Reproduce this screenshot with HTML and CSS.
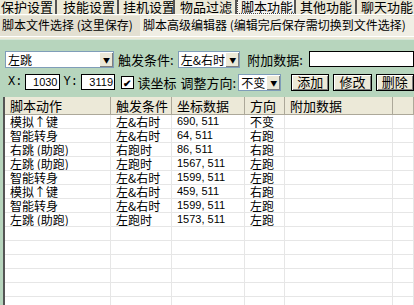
FILE: index.html
```html
<!DOCTYPE html>
<html lang="zh-CN">
<head>
    <meta charset="UTF-8">
    <title>脚本功能</title>
    <link rel="stylesheet" href="styles.css">
</head>
<body>
    <div class="tabs">
        <span class="tab">保护设置</span>
        <span class="tab">技能设置</span>
        <span class="tab">挂机设置</span>
        <span class="tab">物品过滤</span>
        <span class="tab active">脚本功能</span>
        <span class="tab">其他功能</span>
        <span class="tab">聊天功能</span>
    </div>
    <div class="subtabs">
        <span class="subtab">脚本文件选择 (这里保存)</span>
        <span class="subtab current">脚本高级编辑器 (编辑完后保存需切换到文件选择)</span>
    </div>

    <div class="panel">
        <div class="row row-top">
            <div class="combo combo-action"><span class="val">左跳</span><span class="drop">&#9660;</span></div>
            <span class="lbl">触发条件:</span>
            <div class="combo combo-trigger"><span class="val">左&amp;右时</span><span class="drop">&#9660;</span></div>
            <span class="lbl lbl-extra">附加数据:</span>
            <div class="field field-extra"></div>
        </div>
        <div class="row row-second">
            <span class="lbl lbl-xy">X:</span>
            <div class="field field-num">1030</div>
            <span class="lbl lbl-xy">Y:</span>
            <div class="field field-num">3119</div>
            <span class="check">&#10004;</span>
            <span class="lbl">读坐标</span>
            <span class="lbl">调整方向:</span>
            <div class="combo combo-dir"><span class="val">不变</span><span class="drop">&#9660;</span></div>
            <button class="btn btn-add">添加</button>
            <button class="btn">修改</button>
            <button class="btn">删除</button>
        </div>

        <div class="list">
            <div class="line head">
                <span>脚本动作</span><span>触发条件</span><span>坐标数据</span><span>方向</span><span>附加数据</span><span></span>
            </div>
            <div class="line"><span>模拟↑键</span><span>左&amp;右时</span><span class="num">690, 511</span><span>不变</span><span></span><span></span></div>
            <div class="line"><span>智能转身</span><span>左&amp;右时</span><span class="num">64, 511</span><span>右跑</span><span></span><span></span></div>
            <div class="line"><span>右跳 (助跑)</span><span>右跑时</span><span class="num">86, 511</span><span>右跑</span><span></span><span></span></div>
            <div class="line"><span>左跳 (助跑)</span><span>左跑时</span><span class="num">1567, 511</span><span>左跑</span><span></span><span></span></div>
            <div class="line"><span>智能转身</span><span>左&amp;右时</span><span class="num">1599, 511</span><span>左跑</span><span></span><span></span></div>
            <div class="line"><span>模拟↑键</span><span>左&amp;右时</span><span class="num">459, 511</span><span>右跑</span><span></span><span></span></div>
            <div class="line"><span>智能转身</span><span>左&amp;右时</span><span class="num">1599, 511</span><span>左跑</span><span></span><span></span></div>
            <div class="line"><span>左跳 (助跑)</span><span>左跑时</span><span class="num">1573, 511</span><span>左跑</span><span></span><span></span></div>
            <div class="line"><span></span><span></span><span></span><span></span><span></span><span></span></div>
            <div class="line"><span></span><span></span><span></span><span></span><span></span><span></span></div>
            <div class="line"><span></span><span></span><span></span><span></span><span></span><span></span></div>
            <div class="line"><span></span><span></span><span></span><span></span><span></span><span></span></div>
            <div class="line"><span></span><span></span><span></span><span></span><span></span><span></span></div>
            <div class="line"><span></span><span></span><span></span><span></span><span></span><span></span></div>
            <div class="line"><span></span><span></span><span></span><span></span><span></span><span></span></div>
        </div>
    </div>
</body>
</html>
```

FILE: styles.css
```css
body { margin: 0; width: 414px; height: 305px; overflow: hidden; background: #ece9d8; font-family: "Noto Sans CJK SC", "Liberation Sans", sans-serif; font-size: 12px; color: #000; }

/* top tab strip, its upper edge is outside the window */
.tabs { display: flex; height: 14px; border-bottom: 1px solid #fff; }
.tab { padding-left: 1px; line-height: 13px; font-size: 13px; border-right: 2px solid #555; box-sizing: border-box; white-space: nowrap; overflow: hidden; }
.tab:nth-child(1) { width: 57px; }
.tab:nth-child(2) { width: 62px; padding-left: 6px; }
.tab:nth-child(3) { width: 56px; padding-left: 4px; }
.tab:nth-child(4) { width: 62px; padding-left: 5px; }
.tab:nth-child(6) { width: 61px; padding-left: 4px; }
.tab:nth-child(7) { flex: 1; padding-left: 4px; border-right: 0; }
.tab.active { width: 59px; padding-left: 3px; border: 1px dotted #444; border-top: 0; border-right: 2px solid #555; background: #f4f3ee; }

.subtabs { display: flex; height: 20px; padding-top: 1px; border-bottom: 1px solid #fff; }
.subtab { line-height: 18px; font-size: 12px; padding-left: 2px; white-space: nowrap; }
.subtab:first-child { width: 138px; background: #e3e0d2; }
.subtab.current { padding-left: 3px; background: #f0eee4; flex: 1; }

.panel { margin-top: 2px; background: #b7d5bd; height: 267px; border-top: 1px solid #d6e8da; padding-top: 10px; box-sizing: border-box; }

.row { display: flex; align-items: center; padding-left: 5px; }
.row-top { height: 18px; gap: 4px; }
.row-second { height: 18px; margin-top: 5px; padding-left: 8px; gap: 4px; }

.lbl { font-size: 13px; white-space: nowrap; }
.lbl-xy { font-family: "Liberation Mono", monospace; font-size: 12px; width: 13px; }
.lbl-extra { margin-left: 3px; }

.combo { display: flex; height: 17px; background: #fff; border: 1px solid #7f9db9; box-sizing: border-box; }
.combo .val { flex: 1; padding-left: 2px; line-height: 15px; font-size: 12px; white-space: nowrap; overflow: hidden; }
.combo .drop { width: 13px; background: #ece9d8; border-left: 1px solid #fff; border-top: 1px solid #fff; box-shadow: inset -1px -1px #808080; font-size: 7px; line-height: 15px; text-align: center; }
.combo-action { width: 110px; }
.combo-trigger { width: 63px; }
.combo-dir { width: 45px; margin-left: -2px; }

.field { height: 16px; background: #fff; border: 1px solid #000; box-sizing: border-box; }
.field-extra { width: 106px; margin-left: 2px; }
.field-num { width: 36px; text-align: right; padding-right: 1px; font-family: "Liberation Sans", sans-serif; font-size: 11px; line-height: 14px; }

.check { width: 13px; height: 13px; border: 1px solid #000; background: #fff; box-sizing: border-box; font-size: 10px; line-height: 12px; text-align: center; font-weight: bold; margin-left: 2px; }

.btn { height: 17px; padding: 0; width: 40px; background: #ece9d8; border: 1px solid #000; box-shadow: inset 1px 1px #fff, inset -1px -1px #808080; font-family: inherit; font-size: 13px; line-height: 14px; color: #000; }
.btn-add { margin-left: 6px; }

.list { margin: 6px 0 0 3px; background: #fff; border-left: 2px solid #555; height: 211px; overflow: hidden; }
.line { display: grid; grid-template-columns: 106px 61px 73px 40px 108px 1fr; height: 13px; border-bottom: 1px solid #e6e6e6; }
.line span { padding-left: 5px; font-size: 12px; line-height: 13px; white-space: nowrap; overflow: hidden; border-right: 1px solid #e6e6e6; }
.line .num { font-family: "Liberation Sans", sans-serif; font-size: 11px; }
.line.head { height: 17px; background: #ece9d8; border-bottom: 1px solid #aca899; }
.line.head span { font-size: 13px; line-height: 17px; border-right: 1px solid #aca899; }
```
